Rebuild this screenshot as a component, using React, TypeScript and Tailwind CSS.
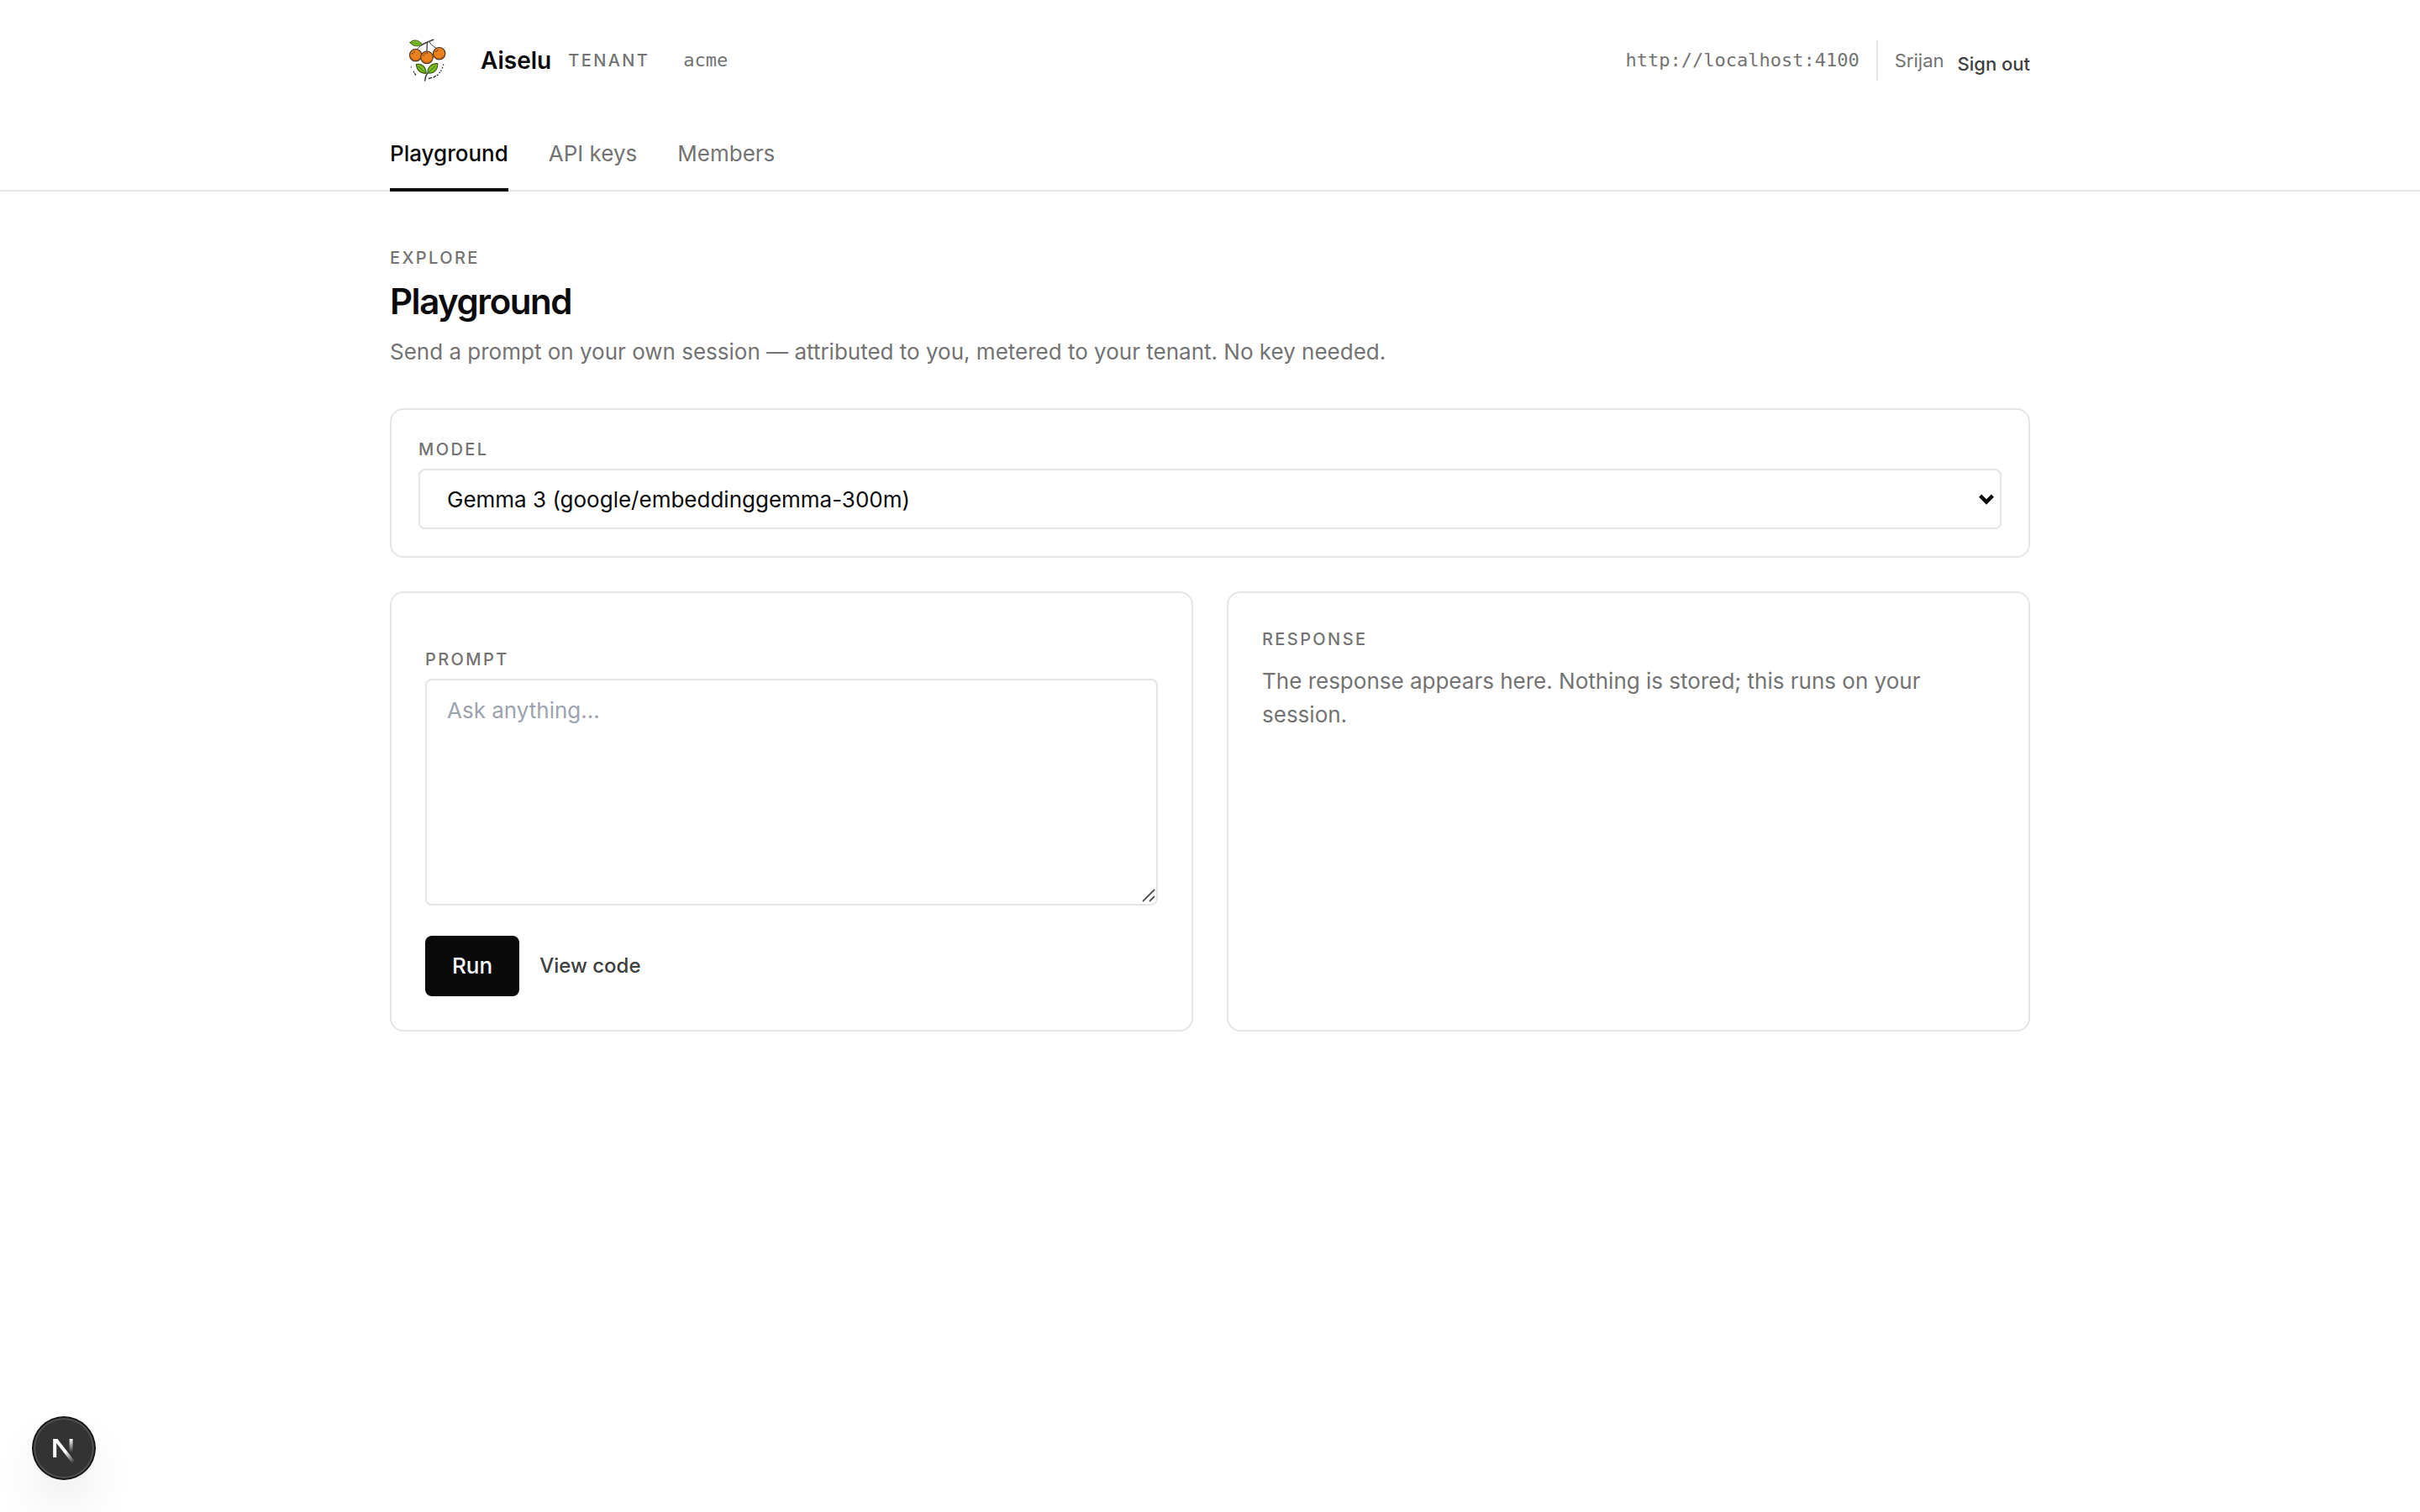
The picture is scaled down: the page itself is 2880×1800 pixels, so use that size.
import React, { useState } from 'react';

interface Tab {
  label: string;
  href: string;
}

const tabs: Tab[] = [
  { label: 'Playground', href: '#playground' },
  { label: 'API keys', href: '#keys' },
  { label: 'Members', href: '#members' },
];

const LABEL = 'text-[20px] leading-[30px] font-medium tracking-[0.12em] uppercase text-[#737373]';
const CARD = 'rounded-2xl border-2 border-[#e5e5e5] bg-white';
const FIELD = 'block w-full rounded-lg border-2 border-[#e5e5e5] bg-white text-[26px] leading-[39px] text-[#0a0a0a] outline-none';

const Logo: React.FC = () => (
  <svg viewBox="-18 -6 264 264" className="size-22 shrink-0" fill="none" strokeLinecap="round" strokeLinejoin="round" aria-hidden="true">
    <g stroke="#3f4245" strokeWidth="4">
      <path d="M95 71 C106 64 122 58 137 52" strokeWidth="5" />
      <path d="M98 70 C90 75 83 80 78 87" strokeWidth="3" />
      <path d="M115 63 L114 94" />
      <path d="M123 60 C130 70 137 76 146 81" strokeWidth="3" />
    </g>
    <path d="M54 62 C62 50 86 50 97 69 C84 78 62 76 54 62 Z" fill="#7cc01f" stroke="#3c5a1c" strokeWidth="3" />
    <path d="M58 62 L90 67" stroke="#4c7a18" strokeWidth="2" />
    <g fill="#ea811c" stroke="#4a3423" strokeWidth="3.5">
      <circle cx="74" cy="107" r="21.5" />
      <circle cx="158" cy="101" r="21.5" />
      <circle cx="114" cy="115" r="22" />
    </g>
    <g stroke="#c9610d" strokeWidth="3">
      <path d="M60 119 C68 127 82 126 88 117" />
      <path d="M99 127 C107 135 121 135 130 126" />
      <path d="M146 114 C154 121 167 119 173 110" />
    </g>
    <g fill="#3a2a1c">
      <circle cx="62" cy="101" r="2.2" />
      <circle cx="69" cy="96" r="2.2" />
      <circle cx="102" cy="108" r="2.2" />
      <circle cx="108" cy="101" r="2.2" />
      <circle cx="115" cy="99" r="2.2" />
      <circle cx="147" cy="94" r="2.2" />
      <circle cx="153" cy="90" r="2.2" />
    </g>
    <g fill="#7cc01f" stroke="#3c5a1c" strokeWidth="3.5">
      <path d="M76 140 C96 136 112 150 111 172 C92 174 78 160 76 140 Z" />
      <path d="M152 137 C154 158 140 174 117 171 C116 150 130 136 152 137 Z" />
    </g>
    <g stroke="#3c5a1c" strokeWidth="2.5">
      <path d="M84 148 L109 170" />
      <path d="M144 145 L118 170" />
    </g>
    <path d="M116 171 C111 178 108 187 107 198" stroke="#3f4245" strokeWidth="4.5" />
    <g stroke="#1f1f1f" strokeWidth="4">
      <path d="M58 150 L58 150" />
      <path d="M67 166 L68 168" />
      <path d="M71 173 L74 177" />
      <path d="M122 190 L131 188" />
      <path d="M138 186 L145 182" />
      <path d="M151 179 L153 177" />
      <path d="M159 170 L160 169" />
      <path d="M165 163 L165 162" />
      <path d="M169 153 L170 151" />
      <path d="M173 142 L173 141" />
    </g>
  </svg>
);

const Header: React.FC = () => {
  const [active, setActive] = useState('Playground');

  return (
    <header className="border-b-2 border-[#e5e5e5] bg-white">
      <div className="mx-auto max-w-[2048px] px-12 pt-7">
        <div className="flex items-center justify-between">
          <div className="flex items-center">
            <Logo />
            <span className="ml-5 text-[28px] leading-[40px] font-semibold">Aiselu</span>
            <span className="ml-5 text-[20px] leading-[30px] font-medium tracking-[0.12em] text-[#737373]">TENANT</span>
            <span className="ml-10 font-['DejaVu_Sans_Mono',monospace] text-[22px] leading-[30px] text-[#737373]">acme</span>
          </div>
          <div className="flex items-center gap-5">
            <span className="font-['DejaVu_Sans_Mono',monospace] text-[22px] leading-[30px] text-[#737373]">http://localhost:4100</span>
            <div className="flex h-12 items-end gap-4 border-l-2 border-[#e5e5e5] pl-5 text-[22px]">
              <span className="leading-[48px] text-[#737373]">Srijan</span>
              <button type="button" className="leading-[40px] font-medium text-[#404040]">Sign out</button>
            </div>
          </div>
        </div>
        <nav className="mt-6 -mb-[2px] flex gap-12 text-[26px] leading-[40px]">
          {tabs.map((tab) => (
            <a
              key={tab.label}
              href={tab.href}
              onClick={() => setActive(tab.label)}
              className={
                tab.label === active
                  ? 'border-b-4 border-[#0a0a0a] pt-[23px] pb-[21px] font-medium text-[#0a0a0a]'
                  : 'border-b-4 border-transparent pt-[23px] pb-[21px] text-[#737373] hover:text-[#0a0a0a]'
              }
            >
              {tab.label}
            </a>
          ))}
        </nav>
      </div>
    </header>
  );
};

const ModelCard: React.FC = () => (
  <section className={`${CARD} mt-[47px] p-8`}>
    <label htmlFor="model" className={`${LABEL} block`}>Model</label>
    <div className="relative mt-2">
      <select id="model" className={`${FIELD} h-[72px] appearance-none px-8`}>
        <option>Gemma 3 (google/embeddinggemma-300m)</option>
      </select>
      <svg viewBox="0 0 20 14" className="pointer-events-none absolute top-1/2 right-2 h-3.5 w-5 -translate-y-1/2" fill="none" aria-hidden="true">
        <path d="M2.6 3.2 L10 10.6 L17.4 3.2" stroke="#0a0a0a" strokeWidth="4.6" />
      </svg>
    </div>
  </section>
);

const PromptCard: React.FC = () => {
  const [prompt, setPrompt] = useState('');

  return (
    <section className={`${CARD} p-10 pt-16`}>
      <label htmlFor="prompt" className={`${LABEL} block`}>Prompt</label>
      <div className="relative mt-2">
        <textarea
          id="prompt"
          rows={6}
          value={prompt}
          onChange={(e) => setPrompt(e.target.value)}
          placeholder="Ask anything..."
          className={`${FIELD} resize-none px-6 py-4 placeholder:text-[#9ca3af]`}
        />
        <svg viewBox="0 0 16 16" className="pointer-events-none absolute right-[3px] bottom-1 size-4" fill="none" aria-hidden="true">
          <path d="M1 15 L15 1 M9 15 L15 9" stroke="#555555" strokeWidth="1.8" />
        </svg>
      </div>
      <div className="mt-9 flex items-center gap-6">
        <button type="button" className="h-[72px] rounded-lg bg-[#0a0a0a] px-8 text-[26px] leading-[40px] font-medium text-[#fafafa]">
          Run
        </button>
        <button type="button" className="text-[24px] leading-[40px] font-medium text-[#404040]">View code</button>
      </div>
    </section>
  );
};

const ResponseCard: React.FC = () => (
  <section className={`${CARD} p-10`}>
    <h2 className={LABEL}>Response</h2>
    <p className="mt-[15px] text-[26px] leading-[40px] text-[#737373]">
      The response appears here. Nothing is stored; this runs on your session.
    </p>
  </section>
);

// Round dev tools badge that floats in the bottom left corner
const DevBadge: React.FC = () => (
  <button
    type="button"
    aria-label="Open dev tools"
    className="fixed bottom-10 left-10 size-18 rounded-full bg-[#333333] shadow-[0_0_0_2px_#171717,inset_0_0_0_2px_rgba(255,255,255,0.14),0_32px_64px_-16px_rgba(0,0,0,0.24)]"
  >
    <svg viewBox="0 0 72 72" className="size-18" fill="none" aria-hidden="true">
      <defs>
        <linearGradient id="stem" x1="0" y1="25" x2="0" y2="41" gradientUnits="userSpaceOnUse">
          <stop stopColor="white" />
          <stop offset="1" stopColor="white" stopOpacity="0" />
        </linearGradient>
        <linearGradient id="diagonal" x1="38" y1="40" x2="48" y2="53" gradientUnits="userSpaceOnUse">
          <stop stopColor="white" />
          <stop offset="1" stopColor="white" stopOpacity="0" />
        </linearGradient>
        <clipPath id="mark">
          <rect x="23" y="25" width="30" height="30" />
        </clipPath>
      </defs>
      <g clipPath="url(#mark)" strokeWidth="4">
        <path d="M25.2 24 V47" stroke="white" />
        <path d="M24 22.6 L47.6 53" stroke="url(#diagonal)" />
        <path d="M44.6 24 V42" stroke="url(#stem)" />
      </g>
    </svg>
  </button>
);

export default function App() {
  return (
    <div className="min-h-screen bg-white font-['Inter',sans-serif] text-[#0a0a0a] antialiased">
      <Header />
      <main className="mx-auto max-w-[2048px] px-12 py-16">
        <p className={LABEL}>Explore</p>
        <h1 className="mt-2 text-[42px] leading-[57px] font-semibold tracking-[-0.035em]">Playground</h1>
        <p className="mt-3 text-[26px] leading-[40px] text-[#737373]">
          Send a prompt on your own session — attributed to you, metered to your tenant. No key needed.
        </p>
        <ModelCard />
        <div className="mt-10 grid grid-cols-2 gap-10">
          <PromptCard />
          <ResponseCard />
        </div>
      </main>
      <DevBadge />
    </div>
  );
}
